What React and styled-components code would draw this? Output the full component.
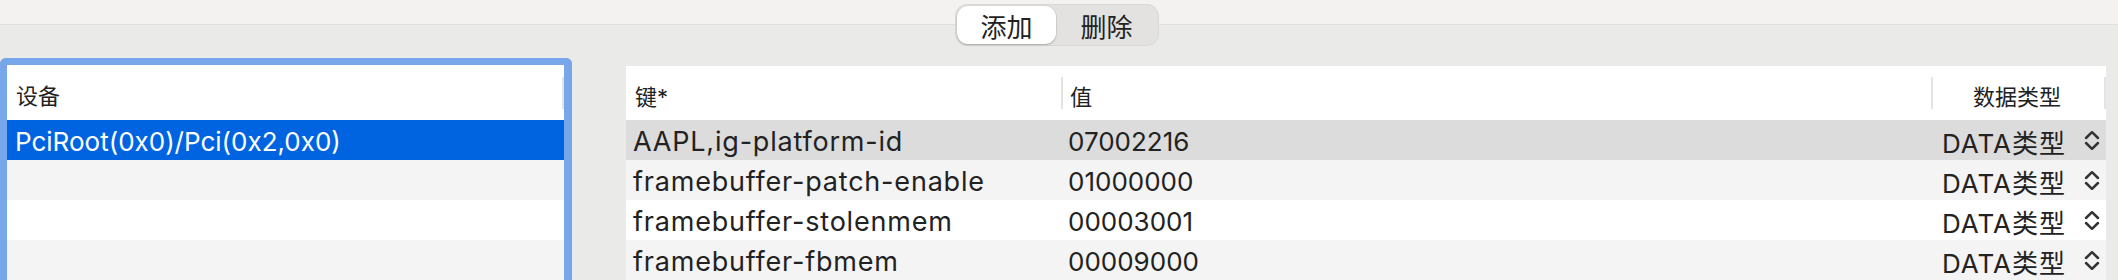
import React from "react";
import styled, { createGlobalStyle } from "styled-components";

const Global = createGlobalStyle`
  html, body { margin: 0; padding: 0; }
  body {
    width: 2118px;
    height: 280px;
    overflow: hidden;
    background: #eaeae9;
    font-family: Inter, "Noto Sans CJK SC", sans-serif;
    color: #222222;
  }
`;

const FONT = `Inter, "Noto Sans CJK SC", sans-serif`;

const Page = styled.div`
  width: 2118px;
  height: 280px;
  overflow: hidden;
  display: flex;
  flex-direction: column;
`;

const TopArea = styled.div`
  height: 58px;
  flex: none;
  display: flex;
  justify-content: center;
  align-items: flex-start;
  padding-top: 4px;
  box-sizing: border-box;
  background: linear-gradient(
    to bottom,
    #f3f2f1 0,
    #f3f2f1 24px,
    #e2e1e0 24px,
    #e2e1e0 25px,
    #eaeae9 25px
  );
`;

const Segmented = styled.div`
  display: flex;
  height: 42px;
  box-sizing: border-box;
  padding: 1px;
  border-radius: 12px;
  background: #e3e2e1;
  border: 1px solid #d9d8d7;
  margin-left: -4px;
`;

const SegButton = styled.div`
  width: ${(p) => p.$w}px;
  display: flex;
  align-items: center;
  justify-content: center;
  font-family: ${FONT};
  font-size: 26px;
  color: #222222;
  border-radius: 11px;
  background: ${(p) => (p.$active ? "#ffffff" : "transparent")};
  box-shadow: ${(p) =>
    p.$active ? "0 1px 2px rgba(0,0,0,0.22), 0 0 0 0.5px rgba(0,0,0,0.08)" : "none"};
`;

const Main = styled.div`
  display: flex;
  align-items: flex-start;
  flex: 1;
  min-height: 0;
  overflow: hidden;
`;

const FocusRing = styled.div`
  width: 572px;
  height: 240px;
  flex: none;
  box-sizing: border-box;
  border: 7px solid #78a6ea;
  border-right-width: 8px;
  border-bottom: none;
  border-radius: 6px 6px 0 0;
  background: #ffffff;
  overflow: hidden;
`;

const RightTable = styled.div`
  margin-left: 54px;
  margin-top: 8px;
  width: 1480px;
  flex: none;
  background: #ffffff;
`;

const HeaderRow = styled.div`
  display: flex;
  height: ${(p) => p.$h}px;
  align-items: center;
  background: #ffffff;
`;

const HeaderCell = styled.div`
  box-sizing: border-box;
  width: ${(p) => (p.$w ? `${p.$w}px` : "auto")};
  flex: ${(p) => (p.$w ? "none" : "1")};
  height: 32px;
  display: flex;
  align-items: center;
  justify-content: ${(p) => (p.$right ? "flex-end" : "flex-start")};
  padding: ${(p) => (p.$right ? "3px 43px 0 0" : `3px 0 0 ${p.$pl}px`)};
  border-left: ${(p) => (p.$sep ? "2px solid #e4e4e4" : "none")};
  font-family: ${FONT};
  font-size: 22px;
  color: #222222;
`;

const EdgeSep = styled.div`
  width: 2px;
  height: 32px;
  background: #e4e4e4;
  flex: none;
`;

const Row = styled.div`
  display: flex;
  height: 40px;
  flex: none;
  align-items: center;
  background: ${(p) => p.$bg};
  color: ${(p) => (p.$selected ? "#ffffff" : "#222222")};
  font-family: ${FONT};
  font-size: 26px;
`;

const Cell = styled.div`
  box-sizing: border-box;
  width: ${(p) => p.$w}px;
  padding-left: ${(p) => p.$pl}px;
  padding-top: 3px;
  white-space: nowrap;
  overflow: hidden;
`;

const KeyCell = styled(Cell)`
  font-size: 27px;
  letter-spacing: 0.8px;
  padding-top: 2px;
`;

const TypeCell = styled.div`
  box-sizing: border-box;
  width: 176px;
  display: flex;
  align-items: center;
  justify-content: flex-end;
  padding-right: 5px;
  gap: 17px;
`;

const TypeText = styled.span`
  padding-top: 3px;
  letter-spacing: 1px;
`;

const Chevrons = () => (
  <svg width="18" height="21" viewBox="0 0 18 21" fill="none">
    <polyline
      points="3,8 9,2.2 15,8"
      stroke="#333333"
      strokeWidth="2.5"
      strokeLinecap="round"
      strokeLinejoin="round"
    />
    <polyline
      points="3,13 9,18.8 15,13"
      stroke="#333333"
      strokeWidth="2.5"
      strokeLinecap="round"
      strokeLinejoin="round"
    />
  </svg>
);

const rowBg = ["#dcdcdc", "#f4f4f4", "#ffffff", "#f4f4f4"];

const data = [
  ["AAPL,ig-platform-id", "07002216"],
  ["framebuffer-patch-enable", "01000000"],
  ["framebuffer-stolenmem", "00003001"],
  ["framebuffer-fbmem", "00009000"],
];

export default function App() {
  return (
    <>
      <Global />
      <Page>
        <TopArea>
          <Segmented>
            <SegButton $active $w={99}>添加</SegButton>
            <SegButton $w={101}>删除</SegButton>
          </Segmented>
        </TopArea>
        <Main>
          <FocusRing>
            <HeaderRow $h={55}>
              <HeaderCell $pl={9}>设备</HeaderCell>
              <EdgeSep />
            </HeaderRow>
            <Row $bg="#0064e1" $selected>
              <Cell $w={557} $pl={8}>PciRoot(0x0)/Pci(0x2,0x0)</Cell>
            </Row>
            <Row $bg="#f4f4f4" />
            <Row $bg="#ffffff" />
            <Row $bg="#f4f4f4" />
          </FocusRing>
          <RightTable>
            <HeaderRow $h={54}>
              <HeaderCell $w={435} $pl={9}>键*</HeaderCell>
              <HeaderCell $w={870} $pl={7} $sep>值</HeaderCell>
              <HeaderCell $w={173} $sep $right>数据类型</HeaderCell>
              <EdgeSep />
            </HeaderRow>
            {data.map(([k, v], i) => (
              <Row key={k} $bg={rowBg[i]}>
                <KeyCell $w={435} $pl={7}>{k}</KeyCell>
                <Cell $w={869} $pl={7}>{v}</Cell>
                <TypeCell>
                  <TypeText>DATA类型</TypeText>
                  <Chevrons />
                </TypeCell>
              </Row>
            ))}
          </RightTable>
        </Main>
      </Page>
    </>
  );
}
